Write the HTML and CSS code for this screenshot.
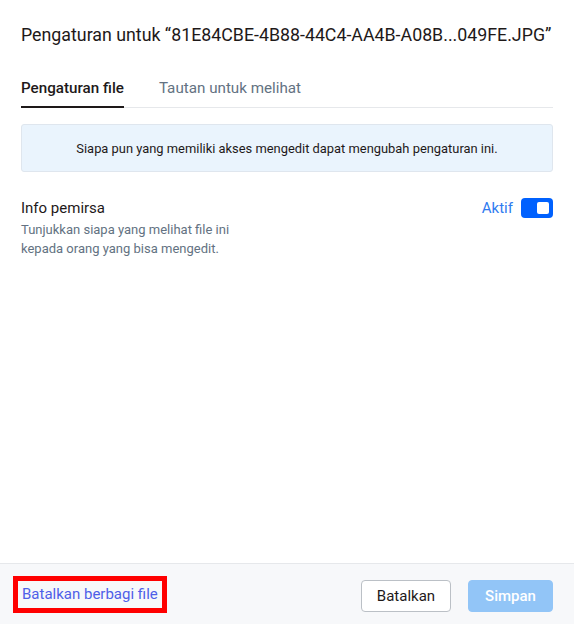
FILE: index.html
```html
<!DOCTYPE html>
<html lang="id">
<head>
<meta charset="utf-8">
<title>Pengaturan</title>
<link rel="stylesheet" href="styles.css">
</head>
<body>
<div class="modal">
  <div class="content">
    <h1 class="title">Pengaturan untuk “81E84CBE-4B88-44C4-AA4B-A08B...049FE.JPG”</h1>
    <div class="tabs">
      <div class="tab active">Pengaturan file</div>
      <div class="tab">Tautan untuk melihat</div>
    </div>
    <div class="notice">Siapa pun yang memiliki akses mengedit dapat mengubah pengaturan ini.</div>
    <div class="setting">
      <div class="setting-text">
        <div class="setting-label">Info pemirsa</div>
        <div class="setting-desc">Tunjukkan siapa yang melihat file ini<br>kepada orang yang bisa mengedit.</div>
      </div>
      <div class="setting-control">
        <span class="state">Aktif</span>
        <span class="toggle"><span class="knob"></span></span>
      </div>
    </div>
  </div>
  <div class="footer">
    <a class="unshare" href="#">Batalkan berbagi file</a>
    <div class="actions">
      <button class="btn btn-secondary">Batalkan</button>
      <button class="btn btn-primary" disabled>Simpan</button>
    </div>
  </div>
</div>
</body>
</html>
```
FILE: styles.css
```css
html, body {
  margin: 0;
  padding: 0;
  background: #ffffff;
}
body {
  font-family: Roboto, "Liberation Sans", sans-serif;
  color: #1e1919;
  width: 574px;
  height: 624px;
}
.modal {
  display: flex;
  flex-direction: column;
  height: 624px;
}
.content {
  flex: 1;
  padding: 0 21px;
}
.title {
  margin: 0;
  padding-top: 23px;
  font-size: 17.8px;
  font-weight: 400;
  line-height: 24px;
  white-space: nowrap;
  color: #1e1919;
}
.tabs {
  display: flex;
  gap: 35px;
  margin-top: 31px;
  border-bottom: 1px solid #e6e8eb;
}
.tab {
  font-size: 15.2px;
  line-height: 20px;
  padding-bottom: 9px;
  color: #637282;
  margin-bottom: -1px;
}
.tab.active {
  color: #1e1919;
  font-weight: 500;
  border-bottom: 2px solid #1e1919;
  padding-bottom: 8px;
}
.notice {
  margin-top: 16px;
  height: 48px;
  box-sizing: border-box;
  border: 1px solid #dfe6ee;
  border-radius: 3px;
  background: #eaf4fd;
  display: flex;
  align-items: center;
  justify-content: center;
  font-size: 12.9px;
  color: #1e1919;
}
.setting {
  display: flex;
  justify-content: space-between;
  align-items: flex-start;
  margin-top: 26px;
}
.setting-label {
  font-size: 15px;
  line-height: 20px;
  color: #1e1919;
}
.setting-desc {
  margin-top: 2px;
  font-size: 13px;
  line-height: 19px;
  color: #637282;
}
.setting-control {
  display: flex;
  align-items: center;
  gap: 8px;
  margin-top: 0;
}
.state {
  font-size: 15px;
  color: #2f7bf0;
}
.toggle {
  width: 32px;
  height: 20px;
  border-radius: 4px;
  background: #0061fe;
  display: flex;
  align-items: center;
  justify-content: flex-end;
  padding-right: 4px;
  box-sizing: border-box;
}
.knob {
  width: 12px;
  height: 12px;
  border-radius: 2px;
  background: #ffffff;
}
.footer {
  height: 61px;
  border-top: 1px solid #e6e8eb;
  background: #f7f8fa;
  display: flex;
  align-items: center;
  justify-content: space-between;
  padding: 0 21px 0 21px;
  box-sizing: border-box;
}
.unshare {
  font-size: 15px;
  color: #4f5fe8;
  text-decoration: none;
  outline: 5px solid #ff0000;
  outline-offset: 3px;
  padding: 0 1px;
  line-height: 21px;
  margin-top: 0;
}
.actions {
  display: flex;
  gap: 17px;
  margin-top: 3px;
}
.btn {
  height: 32px;
  border-radius: 4px;
  font-family: Roboto, "Liberation Sans", sans-serif;
  font-size: 15px;
  box-sizing: border-box;
  cursor: pointer;
}
.btn-secondary {
  width: 90px;
  background: #ffffff;
  border: 1px solid #bbc0c6;
  color: #1e1919;
}
.btn-primary {
  width: 85px;
  background: #92c5f7;
  border: 1px solid #92c5f7;
  color: #ffffff;
  font-weight: 500;
}
```
